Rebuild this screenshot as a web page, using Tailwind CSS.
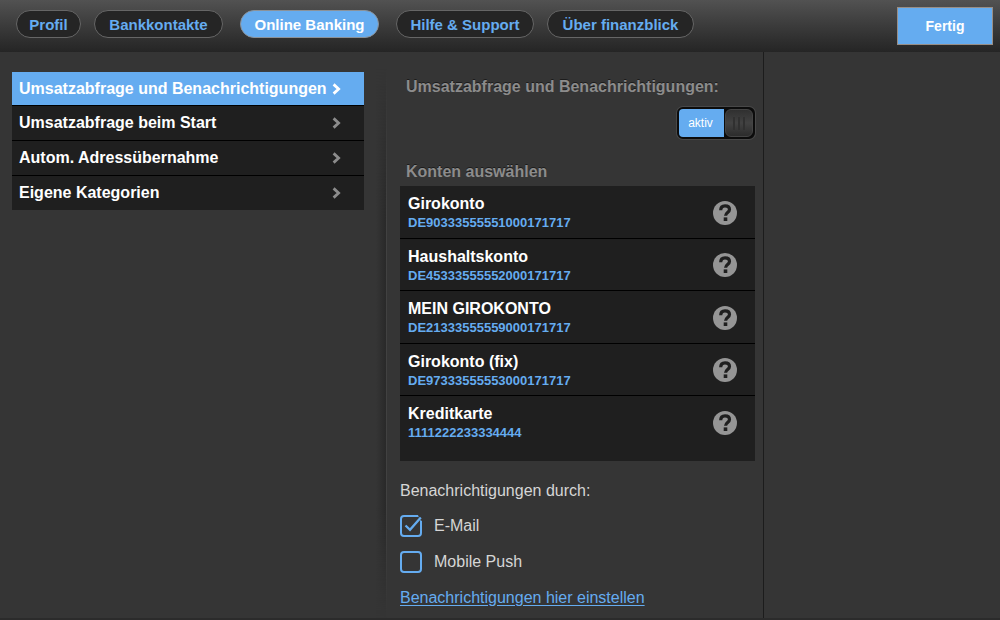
<!DOCTYPE html>
<html lang="de">
<head>
<meta charset="utf-8">
<meta name="viewport" content="width=device-width, initial-scale=1">
<title>Online Banking</title>
<script src="https://cdn.jsdelivr.net/npm/@tailwindcss/browser@4"></script>
</head>
<body class="flex min-h-screen flex-col bg-[#353535] font-['Liberation_Sans',Arial,sans-serif] text-base leading-5 text-white">
<svg class="hidden">
  <symbol id="chevron" viewBox="0 0 9 12"><path d="M1.6 1.4 6.6 6l-5 4.6" fill="none" stroke="currentColor" stroke-width="2.8"/></symbol>
  <symbol id="help" viewBox="0 0 24 24">
    <circle cx="12" cy="12" r="12" fill="#959595"/>
    <path d="M7.7 9.300C7.700 6.300 9.400 4.800 12 4.800c2.700 0 4.500 1.400 4.500 3.600 0 3-3.900 3.100-3.900 6.300" fill="none" stroke="#1f1f1f" stroke-width="3.200"/>
    <path d="M10.700 16.400h3.600v3.600h-3.600z" fill="#1f1f1f"/>
  </symbol>
</svg>

<header class="flex h-[52px] items-start justify-between bg-linear-to-b from-[#525252] to-[#252525] pr-[7px] pl-4">
  <nav class="flex gap-[13px] pt-[10px] text-[15px] font-bold text-[#65acf0]">
    <button class="h-7 w-[65px] rounded-full border border-[#666] bg-[#252525] pt-px">Profil</button>
    <button class="h-7 w-[129px] rounded-full border border-[#666] bg-[#252525] pt-px">Bankkontakte</button>
    <button class="mx-1 h-7 w-[139px] rounded-full border border-[#8b9299] bg-[#65acf0] pt-px text-white" aria-current="page">Online Banking</button>
    <button class="h-7 w-[138px] rounded-full border border-[#666] bg-[#252525] pt-px">Hilfe &amp; Support</button>
    <button class="h-7 w-[147px] rounded-full border border-[#666] bg-[#252525] pt-px">Über finanzblick</button>
  </nav>
  <button class="mt-[7px] h-[38px] w-24 border border-[#988e86] bg-[#65acf0] text-sm font-bold">Fertig</button>
</header>

<div class="grid flex-1 grid-cols-[387fr_377fr_236fr] border-b-2 border-[#2b2b2b]">
  <aside class="flex pl-3">
    <ul class="mt-5 mr-3 flex-1 self-start divide-y divide-black bg-[#1f1f1f] font-bold">
      <li><a href="#" class="flex h-[33px] items-center justify-between bg-[#65acf0] pr-[23px] pl-[7px]" aria-current="true">Umsatzabfrage und Benachrichtigungen<svg class="h-3 w-[9px]"><use href="#chevron"/></svg></a></li>
      <li><a href="#" class="flex h-[34px] items-center justify-between pr-[23px] pl-[7px]">Umsatzabfrage beim Start<svg class="h-3 w-[9px] text-[#8c8c8c]"><use href="#chevron"/></svg></a></li>
      <li><a href="#" class="flex h-[34px] items-center justify-between pr-[23px] pl-[7px]">Autom. Adressübernahme<svg class="h-3 w-[9px] text-[#8c8c8c]"><use href="#chevron"/></svg></a></li>
      <li><a href="#" class="flex h-[34px] items-center justify-between pr-[23px] pl-[7px]">Eigene Kategorien<svg class="h-3 w-[9px] text-[#8c8c8c]"><use href="#chevron"/></svg></a></li>
    </ul>
    <!-- soft edge between menu and content -->
    <div class="w-[11px] border-r border-[#414141] bg-linear-to-r from-[#353535] to-[#292929] [mask-image:linear-gradient(to_bottom,transparent_3%,black_30%,black_80%,transparent)]"></div>
  </aside>

  <main class="border-r border-r-[#1c1c1c] pt-[25px] pr-2 pl-[13px]">
    <h2 id="abfrage" class="pl-[6px] font-bold text-[#8c8c8c] text-shadow-[0_-1px_0_#1c1c1c]">Umsatzabfrage und Benachrichtigungen:</h2>
    <button role="switch" aria-checked="true" aria-labelledby="abfrage" class="mt-[10px] ml-auto flex h-8 w-[78px] items-stretch rounded-md border-2 border-[#0c0c0c] bg-[#0c0c0c] ring-1 ring-[#484848]">
      <span class="flex flex-1 items-center justify-center rounded-l-sm bg-[#65acf0] pr-[2px] text-xs">aktiv</span>
      <span class="ml-px flex w-7 items-center justify-center gap-[3px] rounded-md border border-[#444] bg-linear-to-b from-[#303030] via-[#424242] to-[#2c2c2c]">
        <i class="h-[13px] w-[2px] bg-[#303030]"></i><i class="h-[13px] w-[2px] bg-[#303030]"></i><i class="h-[13px] w-[2px] bg-[#303030]"></i>
      </span>
    </button>
    <h2 class="mt-[23px] pl-[6px] font-bold text-[#8c8c8c] text-shadow-[0_-1px_0_#1c1c1c]">Konten auswählen</h2>
    <ul class="mt-1 divide-y divide-black bg-[#1f1f1f] pb-[13px] font-bold">
      <li class="flex h-[53px] items-center justify-between pt-px pr-[18px] pl-2">
        <div><p>Girokonto</p><p class="mt-px text-[13px] leading-4 text-[#65acf0]">DE90333555551000171717</p></div>
        <button aria-label="Hilfe zu Girokonto"><svg class="size-6"><use href="#help"/></svg></button>
      </li>
      <li class="flex h-[52px] items-center justify-between pt-px pr-[18px] pl-2">
        <div><p>Haushaltskonto</p><p class="mt-px text-[13px] leading-4 text-[#65acf0]">DE45333555552000171717</p></div>
        <button aria-label="Hilfe zu Haushaltskonto"><svg class="size-6"><use href="#help"/></svg></button>
      </li>
      <li class="flex h-[53px] items-center justify-between pt-px pr-[18px] pl-2">
        <div><p>MEIN GIROKONTO</p><p class="mt-px text-[13px] leading-4 text-[#65acf0]">DE21333555559000171717</p></div>
        <button aria-label="Hilfe zu MEIN GIROKONTO"><svg class="size-6"><use href="#help"/></svg></button>
      </li>
      <li class="flex h-[52px] items-center justify-between pt-px pr-[18px] pl-2">
        <div><p>Girokonto (fix)</p><p class="mt-px text-[13px] leading-4 text-[#65acf0]">DE97333555553000171717</p></div>
        <button aria-label="Hilfe zu Girokonto (fix)"><svg class="size-6"><use href="#help"/></svg></button>
      </li>
      <li class="flex h-[52px] items-center justify-between pt-px pr-[18px] pl-2">
        <div><p>Kreditkarte</p><p class="mt-px text-[13px] leading-4 text-[#65acf0]">1111222233334444</p></div>
        <button aria-label="Hilfe zu Kreditkarte"><svg class="size-6"><use href="#help"/></svg></button>
      </li>
    </ul>
    <fieldset class="pt-5 text-[#d6d6d6]">
      <legend class="float-left">Benachrichtigungen durch:</legend>
      <label class="clear-both flex items-center gap-3 pt-[14px]">
        <span class="grid size-[22px]">
          <input type="checkbox" checked class="peer col-start-1 row-start-1 size-[22px] appearance-none rounded-sm border-2 border-[#65acf0]">
          <svg class="pointer-events-none invisible col-start-1 row-start-1 size-[22px] peer-checked:visible" viewBox="0 0 22 22" fill="none"><path d="M18 0h4v6l-2-1z" fill="#353535"/><path d="M5.500 10.500l4.500 4.300L20.800 2.500" stroke="#65acf0" stroke-width="2.300"/></svg>
        </span>E-Mail</label>
      <label class="flex items-center gap-3 pt-[14px]">
        <input type="checkbox" class="size-[22px] appearance-none rounded-sm border-2 border-[#65acf0]">Mobile Push</label>
    </fieldset>
    <a href="#" class="mt-[15px] inline-block text-[#65acf0] underline underline-offset-2">Benachrichtigungen hier einstellen</a>
  </main>
  <div></div>
</div>
</body>
</html>
